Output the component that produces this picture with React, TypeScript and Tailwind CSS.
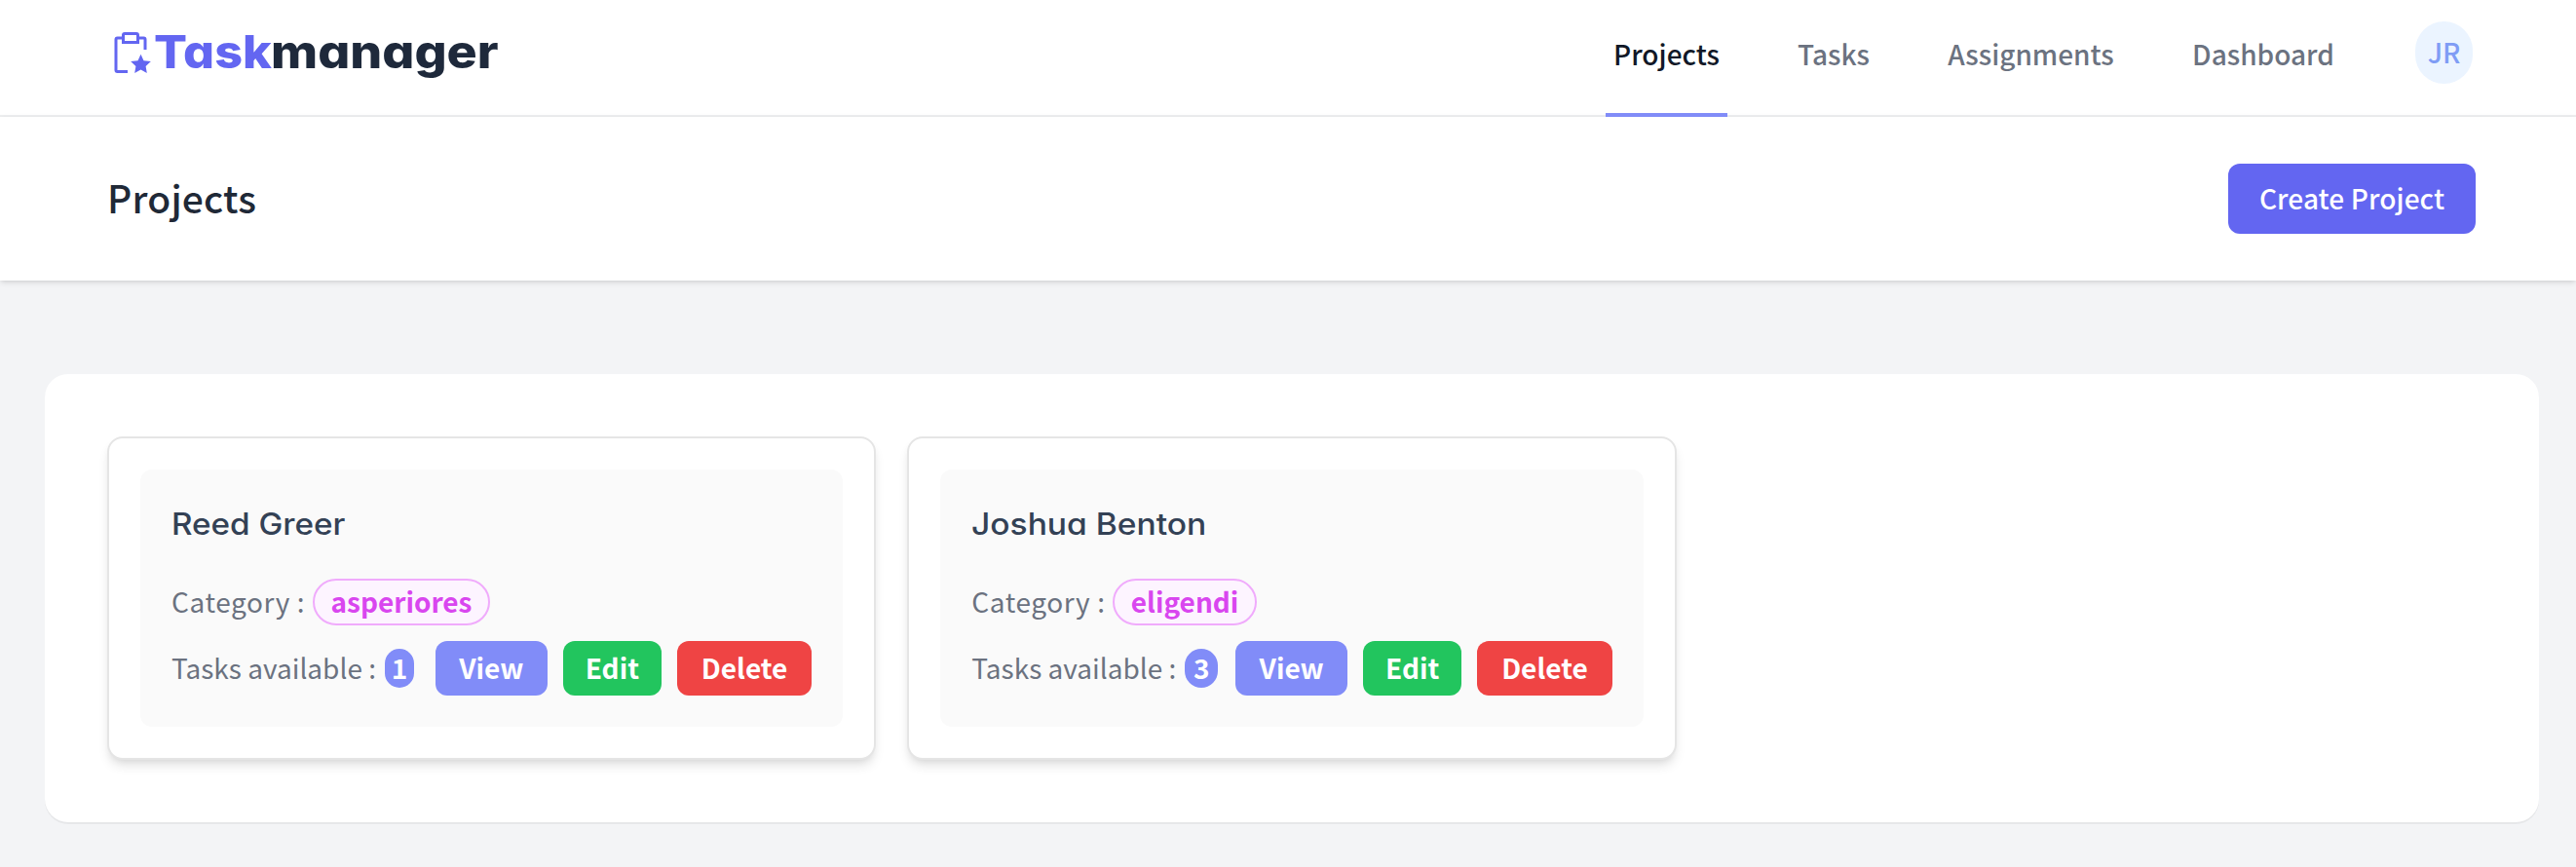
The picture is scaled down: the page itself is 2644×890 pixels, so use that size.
type Project = {
  name: string;
  stretch: string;
  category: string;
  tasks: number;
  badge: string;
};

const projects: Project[] = [
  { name: "Reed Greer", stretch: "scale-x-[1.072]", category: "asperiores", tasks: 1, badge: "w-[30px]" },
  { name: "Joshua Benton", stretch: "scale-x-[1.083]", category: "eligendi", tasks: 3, badge: "w-[34px]" },
];

const links = [
  { label: "Projects", width: "w-[125px]", active: true },
  { label: "Tasks", width: "w-[90px]", active: false },
  { label: "Assignments", width: "w-[187px]", active: false },
  { label: "Dashboard", width: "w-[162px]", active: false },
];

function Logo() {
  return (
    <div className="flex items-start pt-[30px]">
      <svg width="48" height="48" viewBox="0 0 32 32" fill="#6366f1">
        <path d="M14 28H7V7h3v3h12V7h3v7h2V7a2 2 0 0 0-2-2h-3V4a2 2 0 0 0-2-2h-8a2 2 0 0 0-2 2v1H7a2 2 0 0 0-2 2v21a2 2 0 0 0 2 2h7ZM12 4h8v4h-8Z" />
        <path d="m23 17.2 2 4.3 4.9.5-3.5 3.3.8 4.7-4.2-2.4-4.2 2.4.8-4.7-3.5-3.3 4.9-.5Z" />
      </svg>
      <div className="-mt-px flex font-[Inter,sans-serif] text-[47px] leading-[48px] font-extrabold [font-feature-settings:'cv11']">
        <span className="w-[120px] origin-left scale-x-[1.07] text-[#6366f1]">Task</span>
        <span className="w-[232px] origin-left scale-x-[1.105] text-[#1e293b]">manager</span>
      </div>
    </div>
  );
}

function Navbar() {
  return (
    <nav className="flex h-[120px] items-start justify-between border-b-2 border-[#eeeff0] bg-white pr-[106px] pl-[110px]">
      <Logo />
      <div className="flex">
        <div className="flex gap-16">
          {links.map((l) => (
            <div
              key={l.label}
              className={`flex h-[120px] items-center justify-center border-b-4 pb-1.5 font-medium ${l.width} ${
                l.active ? "border-[#818cf8] text-[#111827]" : "border-transparent text-[#6b7280]"
              }`}
            >
              {l.label}
            </div>
          ))}
        </div>
        <div className="mt-[22px] ml-[75px] flex h-16 w-[59px] items-center justify-center rounded-full bg-[#ebf4ff] pb-[3px] font-medium text-[#7f9cf5]">
          JR
        </div>
      </div>
    </nav>
  );
}

function ProjectCard({ p }: { p: Project }) {
  return (
    <article className="rounded-2xl border-2 border-[#e5e5e5] bg-white p-8 shadow-[0_8px_12px_-2px_rgba(0,0,0,0.1),0_4px_8px_-4px_rgba(0,0,0,0.1)]">
      <div className="rounded-xl bg-[#fafafa] p-8">
        <h2
          className={`h-12 w-fit origin-left font-[Inter,sans-serif] text-[31px] leading-[48px] font-medium text-[#334155] [font-feature-settings:'cv11'] ${p.stretch}`}
        >
          {p.name}
        </h2>
        <div className="mt-8 flex h-12 items-center">
          <span className="w-[145px] shrink-0 pb-[3px] tracking-[0.6px] whitespace-nowrap text-[#6b7280]">Category :</span>
          <span className="flex h-12 items-center rounded-full border-2 border-[#f0abfc] bg-[#fdf4ff] px-[16.5px] pb-[3px] font-bold text-[#d946ef]">
            {p.category}
          </span>
        </div>
        <div className="mt-4 flex h-14 items-center justify-between">
          <div className="flex items-center">
            <span className="w-[219px] shrink-0 pb-[3px] whitespace-nowrap text-[#6b7280]">Tasks available :</span>
            <span
              className={`flex h-10 items-center justify-center rounded-full bg-[#818cf8] pb-[3px] font-bold text-white ${p.badge}`}
            >
              {p.tasks}
            </span>
          </div>
          <div className="flex gap-4 font-bold text-white">
            <button className="h-14 w-[115px] rounded-xl bg-[#818cf8] pb-[3px]">View</button>
            <button className="h-14 w-[101px] rounded-xl bg-[#22c55e] pb-[3px]">Edit</button>
            <button className="h-14 w-[138.5px] rounded-xl bg-[#ef4444] pb-[3px]">Delete</button>
          </div>
        </div>
      </div>
    </article>
  );
}

export default function App() {
  return (
    <div className="h-[890px] w-[2644px] overflow-hidden bg-[#f3f4f6] font-['Noto_Sans_CJK_JP',sans-serif] text-[28px] leading-[40px]">
      <Navbar />
      <header className="flex h-[168px] items-center justify-between bg-white pr-[103px] pl-[110px] shadow-[0_2px_6px_rgba(0,0,0,0.1),0_2px_4px_-2px_rgba(0,0,0,0.1)]">
        <h1 className="pb-[5px] text-[39px] leading-[56px] font-medium tracking-[0.2px] text-[#1f2937]">Projects</h1>
        <button className="h-[72px] w-[254px] rounded-xl bg-[#6366f1] pb-[3px] font-medium tracking-[0.1px] text-white">
          Create Project
        </button>
      </header>
      <main className="mt-24 mr-[38px] ml-[46px] grid h-[460px] grid-cols-3 items-start gap-8 rounded-3xl bg-white p-16 shadow-[0_2px_0_rgba(0,0,0,0.05)]">
        {projects.map((p) => (
          <ProjectCard key={p.name} p={p} />
        ))}
      </main>
    </div>
  );
}
